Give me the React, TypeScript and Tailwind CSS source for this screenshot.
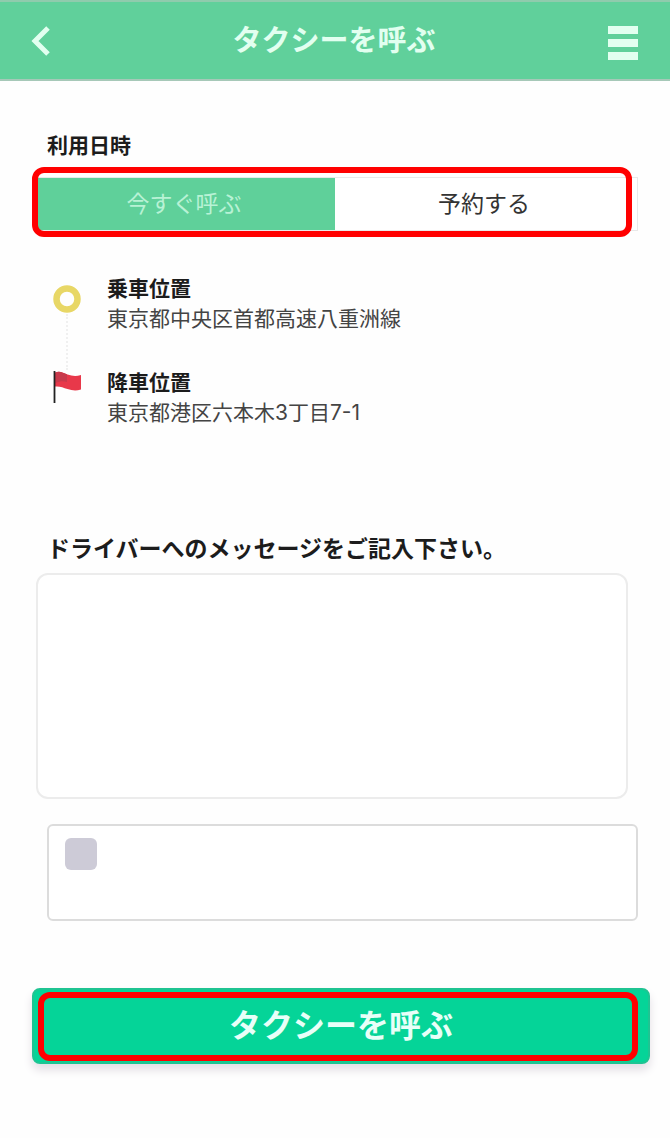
import { useState } from "react";

function PickupIcon() {
  return (
    <svg viewBox="0 0 30 30" className="h-[30px] w-[30px] shrink-0" aria-hidden="true">
      <circle cx="15" cy="15" r="10.5" fill="none" stroke="#e8d766" strokeWidth="6.5" />
    </svg>
  );
}

function FlagIcon() {
  return (
    <svg viewBox="0 0 30 36" className="h-9 w-[30px] shrink-0" aria-hidden="true">
      <path
        d="M3 2.500C8 .5 11 3 15.500 4.500C20 6 24 6.500 29 5V19.500C24 21 20 20.500 15.500 19C11 17.500 8 16 3 16.500Z"
        fill="#e8384a"
      />
      <path d="M3.500 2.500C8 .5 11 3 15 4.500V12C11 10.500 8 11 3.500 13Z" fill="#c83a4c" />
      <path d="M2.500 1V33" stroke="#222" strokeWidth="1.8" />
    </svg>
  );
}

function Place({ title, address }: { title: string; address: string }) {
  return (
    <div className="text-[21px] leading-[30px]">
      <h2 className="font-bold text-[#1c1c1c]">{title}</h2>
      <p className="text-[#444]">{address}</p>
    </div>
  );
}

export default function App() {
  const [mode, setMode] = useState<"now" | "reserve">("now");
  const active = "bg-[#5fd09a] text-[#b8f2d5]";
  const idle = "bg-white text-[#333]";

  return (
    <div
      className="min-h-screen bg-[#fefefe] font-['Inter','Noto_Sans_CJK_JP',sans-serif]"
      lang="ja"
    >
      <header className="flex h-[81px] items-center justify-between border-t-2 border-b-2 border-t-[#8fcbad] border-b-[#a6c8b8] bg-[#60d09b] pr-8 pl-[30px]">
        <button type="button" aria-label="戻る" className="flex w-[30px] items-center">
          <svg viewBox="0 0 22 32" className="h-8 w-[22px]" aria-hidden="true">
            <path d="M18 3L5 16L18 29" fill="none" stroke="#e2fff0" strokeWidth="5" />
          </svg>
        </button>
        <h1 className="text-[29px] leading-10 font-bold text-[#e2fff0]">タクシーを呼ぶ</h1>
        <button type="button" aria-label="メニュー" className="flex w-[30px] flex-col gap-[5px] pt-1">
          <span className="h-2 w-full bg-[#e2fff0]" />
          <span className="h-2 w-full bg-[#e2fff0]" />
          <span className="h-2 w-full bg-[#e2fff0]" />
        </button>
      </header>

      <main className="px-8 pt-[51px] pb-[74px]">
        <p className="ml-[15px] text-[21px] leading-7 font-bold text-[#1c1c1c]">利用日時</p>

        <div className="relative mt-[17px] ml-1 grid h-[54px] grid-cols-[298fr_302fr] border border-[#e9e9e9]">
          <button
            type="button"
            aria-pressed={mode === "now"}
            onClick={() => setMode("now")}
            className={`pr-1 text-[23px] ${mode === "now" ? active : idle}`}
          >
            今すぐ呼ぶ
          </button>
          <button
            type="button"
            aria-pressed={mode === "reserve"}
            onClick={() => setMode("reserve")}
            className={`pr-1 text-[23px] ${mode === "reserve" ? active : idle}`}
          >
            予約する
          </button>
          <div className="pointer-events-none absolute -top-[11px] right-[5px] -bottom-[7px] -left-[5px] rounded-xl border-[6px] border-[#ff0000]" />
        </div>

        <section className="mt-[43px] ml-5 flex gap-[25px]">
          <div className="flex w-[30px] flex-col items-center pt-[10px]">
            <PickupIcon />
            <div className="h-14 border-l-2 border-dotted border-[#f0f0f0]" />
            <FlagIcon />
          </div>
          <div className="flex flex-col gap-[34px]">
            <Place title="乗車位置" address="東京都中央区首都高速八重洲線" />
            <Place title="降車位置" address="東京都港区六本木3丁目7-1" />
          </div>
        </section>

        <label
          htmlFor="message"
          className="mt-[107px] ml-[15px] block text-[23px] leading-7 font-bold text-[#1c1c1c]"
        >
          ドライバーへのメッセージをご記入下さい。
        </label>
        <div className="mt-[10px] mr-[10px] ml-1">
          <textarea
            id="message"
            className="block h-[226px] w-full resize-none rounded-xl border-2 border-[#ececec] bg-white p-4 text-[21px] outline-none"
          />
        </div>

        <div className="mt-[25px] ml-[15px] h-[97px] rounded-md border-2 border-[#dcdcdc] bg-white px-4 py-3">
          <input
            type="checkbox"
            aria-label="確認"
            className="block h-8 w-8 appearance-none rounded-md bg-[#cdcbd7] checked:bg-[#05d498]"
          />
        </div>

        <button
          type="button"
          className="relative mt-[67px] -mr-3 block h-[76px] w-[calc(100%+12px)] rounded-lg border-2 border-[#1fc492] bg-[#05d498] text-[32px] font-bold text-[#e8fff8] shadow-[0_6px_10px_#e3dfe5]"
        >
          タクシーを呼ぶ
          <span className="pointer-events-none absolute top-[2px] right-[10px] bottom-px left-1 rounded-xl border-[6px] border-[#ff0000]" />
        </button>
      </main>
    </div>
  );
}
